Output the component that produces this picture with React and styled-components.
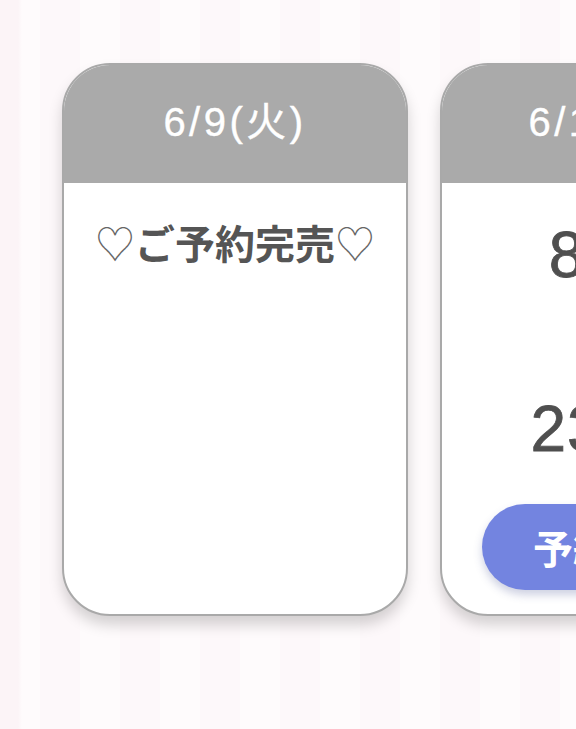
import styled, { createGlobalStyle } from "styled-components";

const GlobalStyle = createGlobalStyle`
  html, body {
    margin: 0;
    padding: 0;
    width: 576px;
    height: 729px;
    overflow: hidden;
  }
  body {
    font-family: "Liberation Sans", "Noto Sans CJK JP", sans-serif;
    background:
      linear-gradient(90deg, #fcf4f7 0px, #fcf4f7 18px, transparent 22px),
      repeating-linear-gradient(
        90deg,
        #fefbfc 0px,
        #fefbfc 40px,
        #fdf8fa 40px,
        #fdf8fa 80px
      );
  }
`;

const Page = styled.div`
  width: 576px;
  height: 729px;
  overflow: hidden;
  padding: 63px 0 0 62px;
  box-sizing: border-box;
`;

const Row = styled.div`
  display: flex;
  gap: 32px;
  align-items: stretch;
`;

const Card = styled.div`
  flex: 0 0 346px;
  display: flex;
  flex-direction: column;
  background: #fff;
  border: 2px solid #a9a9a9;
  border-radius: 48px;
  overflow: hidden;
  box-sizing: border-box;
  box-shadow: 0 9px 14px rgba(0, 0, 0, 0.17);
`;

const Header = styled.div`
  height: 118px;
  padding-bottom: 10px;
  box-sizing: border-box;
  background: #aaaaaa;
  display: flex;
  align-items: center;
  justify-content: center;
  color: #fff;
  font-family: "Liberation Sans", "Noto Sans CJK JP", sans-serif;
  font-size: 40px;
  letter-spacing: 3.5px;
  -webkit-text-stroke: 0.4px #fff;
  white-space: nowrap;
`;

const Body = styled.div`
  flex: 1;
  display: flex;
  flex-direction: column;
  align-items: center;
  padding: 29px 40px 24px;
`;

const SoldOut = styled.div`
  font-family: "Noto Sans CJK JP", sans-serif;
  font-size: 40px;
  font-weight: 700;
  line-height: 60px;
  color: #555;
  white-space: nowrap;
`;

const Heart = styled.span`
  font-weight: 300;
  color: #666;
`;

const Time = styled.div`
  font-family: "Liberation Sans", "Noto Sans CJK JP", sans-serif;
  font-size: 64px;
  letter-spacing: 1px;
  line-height: 87px;
  color: #4f4f4f;
  -webkit-text-stroke: 0.8px #4f4f4f;
  white-space: nowrap;
`;

const ReserveButton = styled.button`
  margin-top: 31px;
  width: 100%;
  height: 86px;
  border: none;
  border-radius: 43px;
  background: #7384e0;
  color: #fff;
  font-family: "Noto Sans CJK JP", sans-serif;
  font-size: 40px;
  font-weight: 700;
  box-shadow: 0 5px 8px rgba(60, 70, 140, 0.25);
`;

export default function App() {
  return (
    <>
      <GlobalStyle />
      <Page>
        <Row>
          <Card>
            <Header>6/9(火)</Header>
            <Body>
              <SoldOut>
                <Heart>♡</Heart>ご予約完売<Heart>♡</Heart>
              </SoldOut>
            </Body>
          </Card>
          <Card>
            <Header>6/10(水)</Header>
            <Body>
              <Time>8:00</Time>
              <Time>〜</Time>
              <Time>23:00</Time>
              <ReserveButton>予約する</ReserveButton>
            </Body>
          </Card>
        </Row>
      </Page>
    </>
  );
}
